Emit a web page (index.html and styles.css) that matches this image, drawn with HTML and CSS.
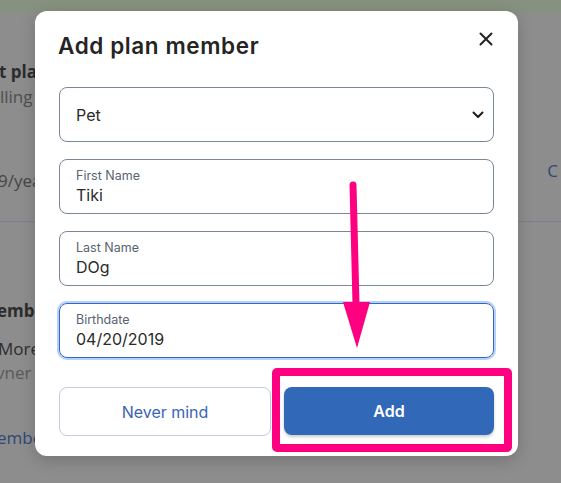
FILE: index.html
```html
<!DOCTYPE html>
<html>
<head>
<meta charset="utf-8">
<link rel="stylesheet" href="styles.css">
</head>
<body>
<div class="page">
  <div class="topbar"></div>
  <div class="content">
    <div class="sec">
      <div class="bold r1">t plan</div>
      <div class="reg r2">lling cycle</div>
      <div class="row3">
        <span class="reg">9/year</span>
        <span class="link">C</span>
      </div>
    </div>
    <div class="sep"></div>
    <div class="sec2">
      <div class="bold r4">embers</div>
      <div class="reg dark r5">More</div>
      <div class="reg light r6">vner</div>
      <div class="link r7">ember</div>
    </div>
  </div>
</div>

<div class="modal">
  <div class="head">
    <h1 class="title">Add plan member</h1>
    <button class="close" aria-label="Close">
      <svg width="14" height="14" viewBox="0 0 14 14"><path d="M1.5 1.5 L12.5 12.5 M12.5 1.5 L1.5 12.5" stroke="#222" stroke-width="2" stroke-linecap="round" fill="none"/></svg>
    </button>
  </div>
  <div class="form">
    <div class="field select">
      <span class="sval">Pet</span>
      <svg class="chev" width="12" height="8" viewBox="0 0 12 8"><path d="M1.5 1.5 L6 6 L10.5 1.5" stroke="#1c1c1c" stroke-width="2" fill="none" stroke-linecap="round" stroke-linejoin="round"/></svg>
    </div>
    <div class="field">
      <span class="lbl">First Name</span>
      <span class="val">Tiki</span>
    </div>
    <div class="field">
      <span class="lbl">Last Name</span>
      <span class="val">DOg</span>
    </div>
    <div class="field focus">
      <span class="lbl">Birthdate</span>
      <span class="val">04/20/2019</span>
    </div>
  </div>
  <div class="actions">
    <button class="btn ghost">Never mind</button>
    <button class="btn primary">Add</button>
  </div>
</div>

<div class="hl-box"></div>
<svg class="arrow" width="40" height="180" viewBox="0 0 40 180">
  <path d="M13 7 L16 126" stroke="#fe0080" stroke-width="7" stroke-linecap="round" fill="none"/>
  <path d="M3 124 L30 124 L17 170 Z" fill="#fe0080"/>
</svg>
</body>
</html>
```

FILE: styles.css
```css
* { box-sizing: border-box; }
html, body {
  margin: 0;
  padding: 0;
}
body {
  width: 561px;
  height: 483px;
  overflow: hidden;
  background: #8d8d8d;
  font-family: "Inter", "Liberation Sans", sans-serif;
  position: relative;
}
.page {
  width: 561px;
  height: 483px;
}
.topbar {
  height: 13px;
  background: #87917f;
}
.content {
  padding-left: 0;
  font-family: "Open Sans", "Liberation Sans", sans-serif;
}
.sec {
  padding-top: 48px;
}
.bold {
  font-weight: 700;
  font-size: 17px;
  color: #2c2c2c;
  line-height: 22px;
  margin-left: -1px;
}
.reg {
  font-size: 17px;
  color: #4e4e4e;
  line-height: 22px;
}
.r2 { margin-top: 3px; margin-left: 0; }
.row3 {
  display: flex;
  justify-content: space-between;
  margin-top: 62px;
  line-height: 22px;
}
.row3 .reg { margin-left: -2px; color: #454545; }
.link {
  color: #2f4677;
  font-size: 17px;
  line-height: 22px;
}
.row3 .link { margin-right: 3px; margin-top: -10px; }
.sep {
  height: 1px;
  background: #7c7f90;
  margin-top: 29px;
}
.sec2 { padding-top: 78px; }
.r4 { margin-left: -3px; }
.r5 { margin-top: 16px; margin-left: -2px; }
.dark { color: #2e2e2e; }
.light { color: #5a5a5a; margin-left: -4px; margin-top: 2px; }
.r7 { margin-top: 43px; margin-left: -3px; }

.modal {
  position: absolute;
  left: 35px;
  top: 11px;
  width: 483px;
  height: 445px;
  background: #fff;
  border-radius: 12px;
  box-shadow: 0 4px 16px rgba(0,0,0,0.18);
  padding: 20px 24px 0 24px;
  display: flex;
  flex-direction: column;
}
.head {
  display: flex;
  justify-content: space-between;
  align-items: flex-start;
  height: 56px;
}
.title {
  margin: 0;
  font-family: "Inter", "Liberation Sans", sans-serif;
  font-weight: 600;
  font-size: 22.5px;
  line-height: 30px;
  color: #242424;
  letter-spacing: 0.6px;
  margin-left: -1px;
}
.close {
  border: 0;
  background: none;
  padding: 0;
  width: 14px;
  height: 14px;
  margin-top: 1px;
  margin-right: 1px;
  display: flex;
}
.form {
  display: flex;
  flex-direction: column;
  gap: 17px;
}
.field {
  height: 55px;
  border: 1px solid #7b8798;
  border-radius: 8px;
  padding: 8px 16px 0 16px;
  display: flex;
  flex-direction: column;
}
.field.select {
  padding: 0 9px 0 16px;
  flex-direction: row;
  align-items: center;
  justify-content: space-between;
}
.sval {
  font-size: 16px;
  color: #2a2a2a;
}
.lbl {
  font-size: 12.5px;
  line-height: 16px;
  color: #596270;
}
.val {
  font-size: 16px;
  line-height: 20px;
  color: #2a2a2a;
  margin-top: 1px;
}
.field.focus {
  border-color: #3069c2;
  box-shadow: 0 0 0 2px #b6d0fb;
}
.actions {
  display: flex;
  gap: 13px;
  margin-top: 29px;
}
.btn {
  flex: 1;
  height: 49px;
  border-radius: 8px;
  font-family: "Inter", "Liberation Sans", sans-serif;
  font-size: 16px;
}
.ghost {
  background: #fff;
  border: 1px solid #c4cae0;
  color: #3a63b6;
}
.primary {
  background: #3168b8;
  border: 0;
  color: #fff;
  font-weight: 600;
  height: 48px;
  box-shadow: 0 2px 3px rgba(0,0,0,0.2);
}

.hl-box {
  position: absolute;
  left: 272px;
  top: 368px;
  width: 240px;
  height: 84px;
  border: 8px solid #fe0080;
  border-radius: 5px;
}
.arrow {
  position: absolute;
  left: 340px;
  top: 178px;
}
```
